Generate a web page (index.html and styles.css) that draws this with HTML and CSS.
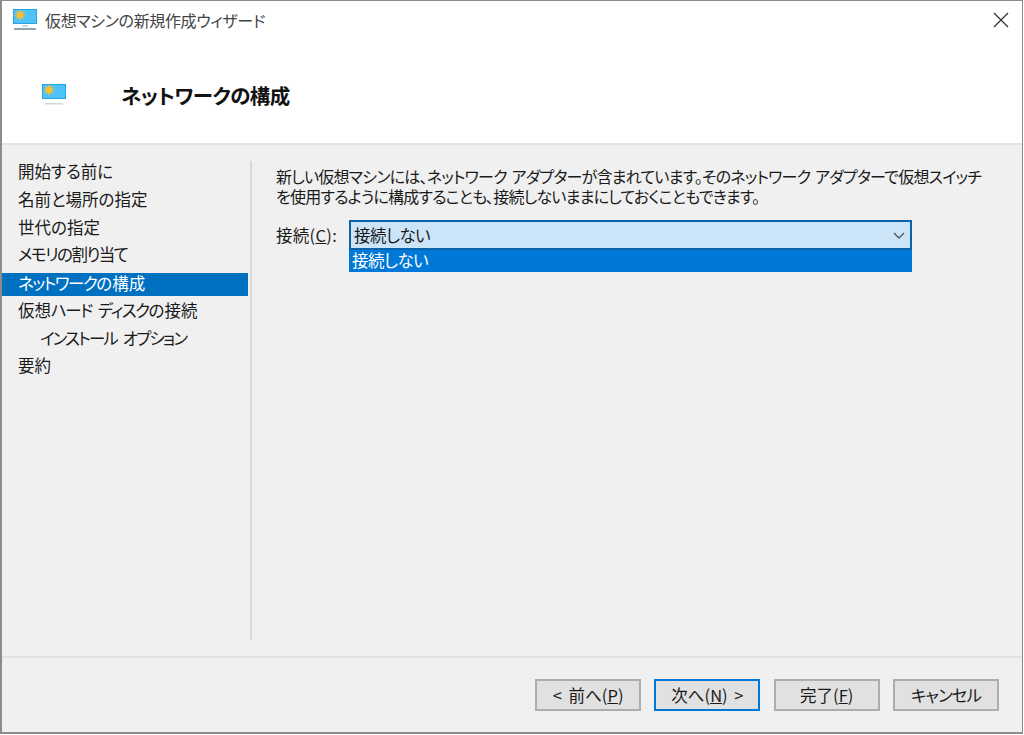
FILE: index.html
```html
<!DOCTYPE html>
<html lang="ja">
<head>
<meta charset="utf-8">
<title>仮想マシンの新規作成ウィザード</title>
<link rel="stylesheet" href="styles.css">
</head>
<body>
<div class="window">
  <div class="titlebar">
    <svg class="vm-icon small" viewBox="0 0 24 24"><rect x="0" y="1" width="24" height="15" fill="#27a3e8"/><rect x="1" y="2" width="22" height="13" fill="#4fc3f7"/><circle cx="7" cy="7" r="3.4" fill="#fbc02d"/><path d="M7 1.5v11M1.5 7h11M3 3l8 8M11 3l-8 8" stroke="#fbc02d" stroke-width="1"/><rect x="9" y="17" width="6" height="2" fill="#cfd8dc"/><rect x="1" y="20" width="22" height="2" fill="#90a4ae"/></svg>
    <span class="title-text">仮想マシンの新規作成ウィザード</span>
    <svg class="close" viewBox="0 0 16 16"><path d="M1 1L15 15M15 1L1 15" stroke="#333" stroke-width="1.3"/></svg>
  </div>
  <div class="header">
    <svg class="vm-icon" viewBox="0 0 24 24"><rect x="0" y="1" width="24" height="15" fill="#27a3e8"/><rect x="1" y="2" width="22" height="13" fill="#4fc3f7"/><circle cx="7" cy="7" r="3.4" fill="#fbc02d"/><path d="M7 1.5v11M1.5 7h11M3 3l8 8M11 3l-8 8" stroke="#fbc02d" stroke-width="1"/><rect x="3" y="20" width="18" height="1.5" fill="#cfd8dc"/></svg>
    <h1>ネットワークの構成</h1>
  </div>
  <div class="main">
    <ul class="steps">
      <li>開始する前に</li>
      <li>名前と場所の指定</li>
      <li>世代の指定</li>
      <li><span class="narrow">メモリの割り当て</span></li>
      <li class="active"><span class="narrow">ネットワーク</span>の構成</li>
      <li>仮想<span class="narrow">ハード ディスク</span>の接続</li>
      <li class="sub"><span class="narrow">インストール オプション</span></li>
      <li>要約</li>
    </ul>
    <div class="content">
      <p class="desc">新しい仮想マシンには、ネットワーク アダプターが含まれています。そのネットワーク アダプターで仮想スイッチ<br>を使用するように構成することも、接続しないままにしておくこともできます。</p>
      <div class="field">
        <label class="field-label">接続(<u>C</u>):</label>
        <div class="combo">
          <div class="combo-box">
            <span>接続しない</span>
            <svg class="chev" viewBox="0 0 12 7"><path d="M1 1l5 5 5-5" fill="none" stroke="#555" stroke-width="1.4"/></svg>
          </div>
          <div class="combo-item">接続しない</div>
        </div>
      </div>
    </div>
  </div>
  <div class="footer">
    <button class="btn">&lt; 前へ(<u>P</u>)</button>
    <button class="btn primary">次へ(<u>N</u>) &gt;</button>
    <button class="btn">完了(<u>F</u>)</button>
    <button class="btn cancel">キャンセル</button>
  </div>
</div>
</body>
</html>
```
FILE: styles.css
```css
* { box-sizing: border-box; }
html, body { margin: 0; padding: 0; height: 100%; background: #fff; }
body { font-family: "Noto Sans CJK JP", "Noto Sans", sans-serif; font-size: 16.5px; font-feature-settings: "palt"; color: #1a1a1a; overflow: hidden; }
.window { width: 1023px; height: 734px; display: flex; flex-direction: column; border: 2px solid #8c8c8c; border-width: 1px 1px 2px 2px; background: #f0f0f0; }
.titlebar { height: 37px; background: #fff; display: flex; align-items: center; padding: 0 11px; flex: none; }
.vm-icon.small { width: 24px; height: 24px; margin-right: 8px; }
.title-text { font-size: 16px; color: #444; line-height: 22px; padding-top: 1px; letter-spacing: -0.35px; flex: 1; }
.close { width: 16px; height: 16px; margin-right: 2px; }
.header { height: 107px; background: #fff; display: flex; align-items: center; flex: none; padding: 8px 0 0 40px; border-bottom: 2px solid #e3e3e3; }
.header .vm-icon { width: 24px; height: 24px; margin-right: 55px; }
.header h1 { margin: 0; font-size: 20.5px; font-weight: 700; color: #111; line-height: 26px; letter-spacing: -0.5px; }
.main { flex: 1; display: flex; min-height: 0; padding-top: 16px; }
.steps { list-style: none; margin: 0; padding: 0; width: 250px; height: 479px; border-right: 2px solid #d9d9d9; flex: none; margin-right: 24px; }
.steps li { height: 27.75px; line-height: 21px; padding-left: 16px; margin-right: 2px; white-space: nowrap; }
.steps li.active { background: #0070c0; color: #fff; height: 23px; margin-top: 1px; margin-bottom: 3.75px; line-height: 21px; }
.steps li.sub { padding-left: 38px; }
.narrow { letter-spacing: -1.5px; word-spacing: 4px; }
.sub .narrow { letter-spacing: -1.85px; }
.content { flex: 1; padding-top: 5px; }
.desc { margin: 0; font-size: 16px; line-height: 20px; letter-spacing: -0.78px; word-spacing: 2px; white-space: nowrap; }
.field { display: flex; margin-top: 14px; }
.field-label { width: 73px; line-height: 30px; letter-spacing: 0.3px; flex: none; }
.combo { width: 563px; }
.combo-box { height: 30px; background: #cce4f7; border: 2px solid #0a62a8; display: flex; align-items: center; justify-content: space-between; padding: 0 5px 0 3px; letter-spacing: -0.5px; }
.chev { width: 12px; height: 7px; }
.combo-item { height: 22px; background: #0078d7; color: #fff; line-height: 21px; padding-left: 3px; letter-spacing: -0.5px; }
.footer { height: 76px; flex: none; border-top: 2px solid #e3e3e3; display: flex; justify-content: flex-end; gap: 13.3px; padding: 21px 23px 0 0; }
.btn { width: 106px; height: 32px; background: #e1e1e1; border: 2px solid #adadad; font: inherit; color: #1a1a1a; padding: 0; line-height: 26px; word-spacing: 3px; }
.btn.primary { border-color: #0078d7; }
.btn.cancel { letter-spacing: -1px; }
```
